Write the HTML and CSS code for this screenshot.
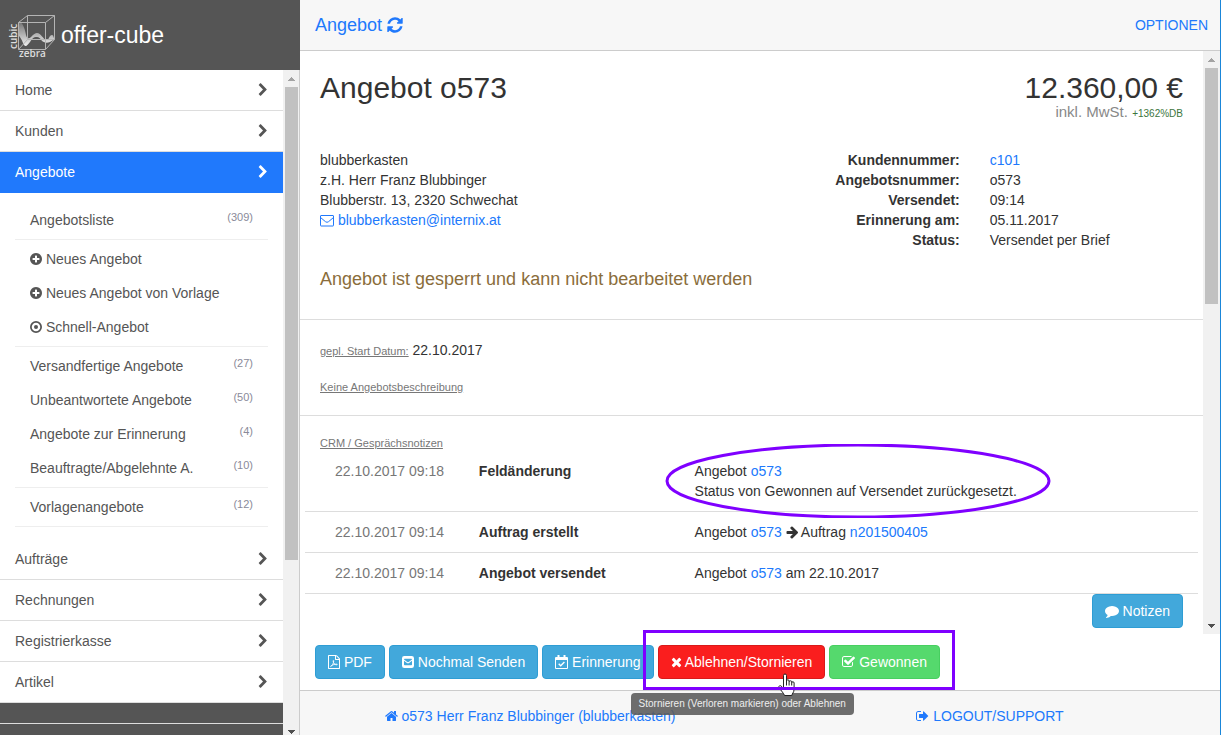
FILE: index.html
```html
<!DOCTYPE html>
<html lang="de">
<head>
<meta charset="utf-8">
<title>offer-cube – Angebot o573</title>
<link rel="stylesheet" href="styles.css">
</head>
<body>
<svg class="sprite" aria-hidden="true">
  <symbol id="chevron" viewBox="256 0 1280 1792"><path d="M1363 877l-742 742q-19 19-45 19t-45-19l-166-166q-19-19-19-45t19-45l531-531-531-531q-19-19-19-45t19-45l166-166q19-19 45-19t45 19l742 742q19 19 19 45t-19 45z"/></symbol>
  <symbol id="plus" viewBox="128 0 1536 1792"><path d="M1344 960v-128q0-26-19-45t-45-19h-256v-256q0-26-19-45t-45-19h-128q-26 0-45 19t-19 45v256h-256q-26 0-45 19t-19 45v128q0 26 19 45t45 19h256v256q0 26 19 45t45 19h128q26 0 45-19t19-45v-256h256q26 0 45-19t19-45zm320-64q0 209-103 385.5t-279.5 279.5-385.5 103-385.5-103-279.5-279.5-103-385.5 103-385.5 279.5-279.5 385.5-103 385.5 103 279.5 279.5 103 385.5z"/></symbol>
  <symbol id="dot" viewBox="128 0 1536 1792"><circle cx="896" cy="896" r="656" fill="none" stroke="currentColor" stroke-width="224"/><circle cx="896" cy="896" r="256"/></symbol>
  <symbol id="up" viewBox="0 0 7 4"><path d="M3 0h1v1h1v1h1v1h1v1H0V3h1V2h1V1h1z"/></symbol>
  <symbol id="down" viewBox="0 0 7 4"><path d="M0 0h7v1H6v1H5v1H4v1H3V3H2V2H1V1H0z"/></symbol>
</svg>

<aside class="sidebar">
  <header class="brand">
    <svg class="logo" viewBox="0 0 48 48" width="48" height="48" aria-label="cubic zebra" role="img">
      <defs><linearGradient id="wave" x1="0" x2="0" y1="0" y2="1"><stop offset="0" stop-color="#fff" stop-opacity=".15"/><stop offset="1" stop-color="#fff" stop-opacity=".9"/></linearGradient></defs>
      <path fill="url(#wave)" d="M9 10c3 1 6 7 7 14 1 4 3 4 5 2 3-3 4-4 6-4 4 0 6 6 9 7 3 1 3-5 6-5 2 0 1 3 3 4l-5 3c-3 1-5 1-8-1-2-3-3-4-5-4-4 0-5 2-7 5-3 4-5 6-7 1-1-3-3-6-4-7z"/>
      <path fill="none" stroke="#b4b4b4" d="M8.500 11.500h27v27h-27zM17.500 4.500h27v24h-27zM8.500 11.500l9-7M35.500 11.500l9-7M35.500 38.500l9-10M8.500 38.500l9-10"/>
      <text class="logo-text" x="9" y="46">zebra</text>
      <text class="logo-text" transform="translate(7 38) rotate(-90)">cubic</text>
    </svg>
    <span class="brand-name">offer-cube</span>
  </header>
  <div class="side-body">
    <nav class="menu">
      <a class="item" href="#">Home<svg class="chev"><use href="#chevron"/></svg></a>
      <a class="item" href="#">Kunden<svg class="chev"><use href="#chevron"/></svg></a>
      <a class="item active" href="#">Angebote<svg class="chev"><use href="#chevron"/></svg></a>
      <div class="submenu">
        <div class="group"><a class="sub" href="#">Angebotsliste<span class="count">(309)</span></a></div>
        <div class="group">
          <a class="sub" href="#"><span><svg class="ico w12"><use href="#plus"/></svg> Neues Angebot</span></a>
          <a class="sub" href="#"><span><svg class="ico w12"><use href="#plus"/></svg> Neues Angebot von Vorlage</span></a>
          <a class="sub" href="#"><span><svg class="ico w12"><use href="#dot"/></svg> Schnell-Angebot</span></a>
        </div>
        <div class="group">
          <a class="sub" href="#">Versandfertige Angebote<span class="count">(27)</span></a>
          <a class="sub" href="#">Unbeantwortete Angebote<span class="count">(50)</span></a>
          <a class="sub" href="#">Angebote zur Erinnerung<span class="count">(4)</span></a>
          <a class="sub" href="#">Beauftragte/Abgelehnte A.<span class="count">(10)</span></a>
        </div>
        <div class="group"><a class="sub" href="#">Vorlagenangebote<span class="count">(12)</span></a></div>
      </div>
      <a class="item" href="#">Aufträge<svg class="chev"><use href="#chevron"/></svg></a>
      <a class="item" href="#">Rechnungen<svg class="chev"><use href="#chevron"/></svg></a>
      <a class="item" href="#">Registrierkasse<svg class="chev"><use href="#chevron"/></svg></a>
      <a class="item" href="#">Artikel<svg class="chev"><use href="#chevron"/></svg></a>
      <div class="menu-gap"></div>
    </nav>
    <div class="scrollbar side-scroll" aria-hidden="true">
      <div class="arrow up"><svg><use href="#up"/></svg></div>
      <div class="track"><div class="thumb thumb-side"></div></div>
      <div class="arrow end"><svg><use href="#down"/></svg></div>
    </div>
  </div>
</aside>

<main class="main">
  <header class="topbar">
    <a class="title" href="#">Angebot <svg class="ico-title" viewBox="128 0 1536 1792"><path d="M1639 1056q0 5-1 7-64 268-268 434.500t-478 166.500q-146 0-282.500-55t-243.500-157l-129 129q-19 19-45 19t-45-19-19-45v-448q0-26 19-45t45-19h448q26 0 45 19t19 45-19 45l-137 137q71 66 161 102t187 36q134 0 250-65t186-179q11-17 53-117 8-23 30-23h192q13 0 22.500 9.500t9.500 22.500zm25-800v448q0 26-19 45t-45 19h-448q-26 0-45-19t-19-45 19-45l138-138q-148-137-349-137-134 0-250 65t-186 179q-11 17-53 117-8 23-30 23h-199q-13 0-22.500-9.500t-9.500-22.500v-7q65-268 270-434.500t480-166.500q146 0 284 55.500t245 156.500l130-129q19-19 45-19t45 19 19 45z"/></svg></a>
    <a href="#">OPTIONEN</a>
  </header>

  <div class="view">
    <div class="content">
      <section class="offer">
        <div class="headline">
          <h1>Angebot o573</h1>
          <div class="price">
            <div class="amount">12.360,00 €</div>
            <div class="tax">inkl. MwSt. <span class="margin">+1362%DB</span></div>
          </div>
        </div>
        <div class="details">
          <address>blubberkasten<br>z.H. Herr Franz Blubbinger<br>Blubberstr. 13, 2320 Schwechat<br>
            <a href="#"><svg class="ico w14" viewBox="0 0 14 14"><path fill="none" stroke="currentColor" d="M1 2.500h12q.5 0 .5.500v9.500q0 .5-.5.500H1q-.5 0-.5-.5V3q0-.5.500-.5zM.500 4.500l5 4.200q1.500 1.200 3 0l5-4.200"/></svg> blubberkasten@internix.at</a></address>
          <dl class="facts">
            <dt>Kundennummer:</dt><dd><a href="#">c101</a></dd>
            <dt>Angebotsnummer:</dt><dd>o573</dd>
            <dt>Versendet:</dt><dd>09:14</dd>
            <dt>Erinnerung am:</dt><dd>05.11.2017</dd>
            <dt>Status:</dt><dd>Versendet per Brief</dd>
          </dl>
        </div>
        <p class="locked">Angebot ist gesperrt und kann nicht bearbeitet werden</p>
      </section>

      <section class="planning">
        <p><span class="caption">gepl. Start Datum:</span> 22.10.2017</p>
        <p><span class="caption">Keine Angebotsbeschreibung</span></p>
      </section>

      <section class="crm">
        <p class="crm-title"><span class="caption">CRM / Gesprächsnotizen</span></p>
        <div class="log">
          <span class="when">22.10.2017 09:18</span><strong>Feldänderung</strong>
          <div class="marked">Angebot <a href="#">o573</a><br>Status von Gewonnen auf Versendet zurückgesetzt.
            <svg class="ellipse" viewBox="0 0 386 74"><ellipse cx="193" cy="37" rx="191" ry="36"/></svg></div>
        </div>
        <div class="log">
          <span class="when">22.10.2017 09:14</span><strong>Auftrag erstellt</strong>
          <div>Angebot <a href="#">o573</a> <svg class="ico w12" viewBox="64 0 1536 1792"><path d="M1600 960q0 54-37 91l-651 651q-39 37-91 37-51 0-90-37l-75-75q-38-38-38-91t38-91l293-293h-704q-52 0-84.500-37.500t-32.500-90.500v-128q0-53 32.500-90.500t84.500-37.500h704l-293-294q-38-36-38-90t38-90l75-75q38-38 90-38 53 0 91 38l651 651q37 35 37 90z"/></svg> Auftrag <a href="#">n201500405</a></div>
        </div>
        <div class="log">
          <span class="when">22.10.2017 09:14</span><strong>Angebot versendet</strong>
          <div>Angebot <a href="#">o573</a> am 22.10.2017</div>
        </div>
        <div class="note-row"><button class="btn info" type="button"><svg class="ico w14" viewBox="0 0 1792 1792"><path d="M1792 896q0 174-120 321.500t-326 233-450 85.500q-70 0-145-8-198 175-460 242-49 14-114 22-17 2-30.500-9t-17.500-29v-1q-3-4-.5-12t2-10 4.500-9.500l6-9 7-8.500 8-9q7-8 31-34.500t34.500-38 31-39.500 32.500-51 27-59 26-76q-157-89-247.500-220t-90.500-281q0-130 71-248.500t191-204.500 286-136.500 348-50.500q244 0 450 85.500t326 233 120 321.500z"/></svg> Notizen</button></div>
      </section>
    </div>
    <div class="scrollbar" aria-hidden="true">
      <div class="arrow up"><svg><use href="#up"/></svg></div>
      <div class="track"><div class="thumb thumb-main"></div></div>
      <div class="arrow"><svg><use href="#down"/></svg></div>
    </div>
  </div>

  <div class="actions">
    <button class="btn info" type="button"><svg class="ico w12" viewBox="128 0 1536 1792"><path d="M1596 380q28 28 48 76t20 88v1152q0 40-28 68t-68 28h-1344q-40 0-68-28t-28-68v-1600q0-40 28-68t68-28h896q40 0 88 20t76 48zm-444-244v376h376q-10-29-22-41l-313-313q-12-12-41-22zm384 1528v-1024h-416q-40 0-68-28t-28-68v-416h-768v1536h1280z"/><path fill="none" stroke="currentColor" stroke-width="110" d="M480 1480c160-60 380-440 380-720 0-90-80-80-80 0 20 300 240 520 500 500 80-20 40-90-60-90-240 0-480 80-680 200-80 50-110 100-60 110z"/></svg> PDF</button>
    <button class="btn info" type="button"><svg class="ico w12" viewBox="0 0 12 14"><path fill-rule="evenodd" d="M2.300 1h7.400Q12 1 12 3.300v7.400Q12 13 9.700 13H2.300Q0 13 0 10.700V3.300Q0 1 2.300 1zM2 5.700v3.800q0 .7.700.7h6.600q.7 0 .7-.7V5.700L7.400 7.800q-1.400 1-2.800 0zM2 4.500l3 2.300q1 .7 2 0l3-2.300q0-.7-.7-.7H2.700q-.7 0-.7.700z"/></svg> Nochmal Senden</button>
    <button class="btn info" type="button"><svg class="ico w13" viewBox="0 0 13 14"><path fill-rule="evenodd" d="M1 2h11q1 0 1 1v10q0 1-1 1H1q-1 0-1-1V3q0-1 1-1zM1 5v8h11V5z"/><path d="M2.500 0h2v4h-2zM8.500 0h2v4h-2z"/><path fill="none" stroke="currentColor" stroke-width="1.400" d="M3.700 8.800L5.700 10.800 9.400 7"/></svg> Erinnerung</button>
    <div class="decision">
      <button class="btn danger" type="button" aria-describedby="tip"><svg class="ico w11" viewBox="192 0 1408 1792"><path d="M1490 1322q0 40-28 68l-136 136q-28 28-68 28t-68-28l-294-294-294 294q-28 28-68 28t-68-28l-136-136q-28-28-28-68t28-68l294-294-294-294q-28-28-28-68t28-68l136-136q28-28 68-28t68 28l294 294 294-294q28-28 68-28t68 28l136 136q28 28 28 68t-28 68l-294 294 294 294q28 28 28 68z"/></svg> Ablehnen/Stornieren</button>
      <button class="btn success" type="button"><svg class="ico w13" viewBox="64 0 1664 1792"><path d="M1472 930v318q0 119-84.500 203.500t-203.500 84.500h-832q-119 0-203.500-84.500t-84.500-203.500v-832q0-119 84.500-203.500t203.500-84.500h832q63 0 117 25 15 7 18 23 3 17-9 29l-49 49q-10 10-23 10-3 0-9-2-23-6-45-6h-832q-66 0-113 47t-47 113v832q0 66 47 113t113 47h832q66 0 113-47t47-113v-254q0-13 9-22l64-64q10-10 23-10 6 0 12 3 20 8 20 29zm231-489l-814 814q-24 24-57 24t-57-24l-430-430q-24-24-24-57t24-57l110-110q24-24 57-24t57 24l263 263 647-647q24-24 57-24t57 24l110 110q24 24 24 57t-24 57z"/></svg> Gewonnen</button>
      <div class="tooltip" id="tip" role="tooltip">Stornieren (Verloren markieren) oder Ablehnen</div>
      <svg class="pointer" viewBox="0 0 17 24"><path fill="#fff" stroke="#222" d="M5.500 16.500V2.500q0-1.500 1.500-1.500t1.500 1.500V8q0-1.200 1.300-1.200t1.300 1.200v.8q0-1 1.300-1t1.300 1v1q0-1 1.200-1t1.200 1.200v6q0 3-1.800 5l-.5 1.500H6.500L5.500 20.500 1.300 15q-1-1.500.200-2.200 1.200-.5 2.400.9zM8.500 8v4.500M11.100 9v3.500M13.700 10v2.500"/></svg>
      <div class="frame"></div>
    </div>
  </div>

  <footer class="footer">
    <a href="#"><svg class="ico w13" viewBox="64 0 1664 1792"><path d="M1472 992v480q0 26-19 45t-45 19h-384v-384h-256v384h-384q-26 0-45-19t-19-45v-480q0-1 .5-3t.5-3l575-474 575 474q1 2 1 6zm223-69l-62 74q-8 9-21 11h-3q-13 0-21-7l-692-577-692 577q-12 8-24 7-13-2-21-11l-62-74q-8-10-7-23.500t11-21.500l719-599q32-26 76-26t76 26l244 204v-195q0-14 9-23t23-9h192q14 0 23 9t9 23v408l219 182q10 8 11 21.500t-7 23.500z"/></svg> o573 Herr Franz Blubbinger (blubberkasten)</a>
    <a href="#"><svg class="ico w13" viewBox="64 0 1664 1792"><path d="M704 1440q0 4 1 20t.5 26.500-3 23.500-10 19.500-20.500 6.500h-320q-119 0-203.500-84.500t-84.500-203.500v-704q0-119 84.500-203.500t203.500-84.500h320q13 0 22.500 9.500t9.500 22.500q0 4 1 20t.5 26.500-3 23.500-10 19.500-20.500 6.500h-320q-66 0-113 47t-47 113v704q0 66 47 113t113 47h312l11.500 1 11.500 3 8 5.500 7 9 2 13.500zm928-544q0 26-19 45l-544 544q-19 19-45 19t-45-19-19-45v-288h-448q-26 0-45-19t-19-45v-384q0-26 19-45t45-19h448v-288q0-26 19-45t45-19 45 19l544 544q19 19 19 45z"/></svg> LOGOUT/SUPPORT</a>
  </footer>
</main>
</body>
</html>
```
FILE: styles.css
```css
* { box-sizing: border-box; }

body {
  margin: 0;
  height: 100vh;
  display: flex;
  overflow: hidden;
  border-right: 1px solid #1a86d9;
  background: #fff;
  color: #333;
  font: 14px/20px "Liberation Sans", Arial, sans-serif;
}

a { color: #2079fc; text-decoration: none; }
h1, p, dl, dd { margin: 0; }
address { font-style: normal; }
svg { fill: currentColor; }
.sprite { position: absolute; width: 0; height: 0; }

.ico { height: 14px; vertical-align: -2px; }
.w11 { width: 11px; }
.w12 { width: 12px; }
.w13 { width: 13px; }
.w14 { width: 14px; }

/* Sidebar */
.sidebar {
  width: 300px;
  flex: none;
  display: flex;
  flex-direction: column;
  background: #555;
}
.brand {
  height: 70px;
  flex: none;
  display: flex;
  align-items: center;
  gap: 3px;
  padding-left: 10px;
  color: #fff;
}
.brand-name { font-size: 23px; line-height: 26px; }
.logo { overflow: visible; }
.logo-text { font: 600 10px "Open Sans", sans-serif; fill: #ddd; }
.side-body { flex: 1; min-height: 0; display: flex; }
.menu { flex: 1; overflow: hidden; }
.item {
  display: flex;
  align-items: center;
  justify-content: space-between;
  height: 41px;
  padding: 0 15px;
  border-bottom: 1px solid #ddd;
  background: #fff;
  color: #555;
}
.item.active { background: #2079fc; border-color: #2079fc; color: #fff; }
.chev { width: 10px; height: 14px; }
.submenu { padding: 10px 15px; background: #fff; }
.group { padding-bottom: 2px; margin-bottom: 2px; border-bottom: 1px solid #eee; }
.sub {
  display: flex;
  justify-content: space-between;
  padding: 7px 15px;
  color: #555;
}
.count { font-size: 11px; line-height: 14px; color: #8a8a99; }
.menu-gap { height: 21px; border-bottom: 1px solid #ddd; }

/* Scrollbars */
.scrollbar {
  width: 17px;
  flex: none;
  display: flex;
  flex-direction: column;
  background: #f1f1f1;
  color: #505050;
}
.side-scroll { border-right: 1px solid #ccc; }
.arrow { height: 17px; display: flex; align-items: center; justify-content: center; }
.arrow svg { width: 7px; height: 4px; }
.arrow.up { color: #a3a3a3; }
.arrow.end { align-items: flex-end; padding-bottom: 1px; }
.track { flex: 1; padding: 0 2px; }
.side-scroll .track { padding-right: 1px; }
.thumb { background: #c1c1c1; }
.thumb-side { height: 75%; }
.thumb-main { height: 43%; }

/* Main column */
.main { flex: 1; min-width: 0; display: flex; flex-direction: column; }
.topbar {
  height: 51px;
  flex: none;
  display: flex;
  align-items: center;
  justify-content: space-between;
  padding: 0 12px 0 15px;
  background: #f7f7f7;
  border-bottom: 1px solid #ccc;
}
.title { font-size: 18px; }
.ico-title { width: 16px; height: 18px; vertical-align: -3px; }
.view { flex: 1; min-height: 0; display: flex; }
.content { flex: 1; min-width: 0; overflow: hidden; }

.offer { padding: 20px 20px 29px; border-bottom: 1px solid #ddd; }
.headline { display: flex; justify-content: space-between; height: 79px; }
h1, .amount { font-size: 30px; line-height: 33px; font-weight: 400; }
.price { text-align: right; }
.tax { font-size: 15px; line-height: 16px; color: #888; }
.margin { font-size: 10px; color: #3c763d; }
.details { display: grid; grid-template-columns: 1fr 1fr; margin: 0 -15px; }
.details address { padding-left: 15px; }
.facts { display: grid; grid-template-columns: 1fr 1fr; }
.facts dt { padding-right: 15px; font-weight: 700; text-align: right; }
.facts dd { padding-left: 15px; }
.locked { margin-top: 18px; font-size: 18px; line-height: 22px; color: #8a6d3b; }

.planning {
  display: grid;
  gap: 16px;
  padding: 20px 20px 19px;
  border-bottom: 1px solid #ddd;
}
.caption { font-size: 11px; line-height: 14px; color: #777; text-decoration: underline; }

.crm { padding: 16px 5px 0; }
.crm-title { padding: 0 15px 9px; }
.log {
  display: grid;
  grid-template-columns: 2fr 3fr 7fr;
  padding: 0 15px 10px;
  border-bottom: 1px solid #ddd;
}
.log + .log { padding-top: 10px; }
.log > * { margin-left: 15px; }
.when { color: #777; }
.marked { position: relative; }
.ellipse {
  position: absolute;
  left: -30px;
  top: -17px;
  width: 386px;
  height: 74px;
  fill: none;
  stroke: #7f00ff;
  stroke-width: 3px;
}
.note-row { display: flex; justify-content: flex-end; padding-right: 15px; }

/* Buttons */
.btn {
  padding: 6px 12px;
  border: 1px solid;
  border-radius: 4px;
  color: #fff;
  font: inherit;
  white-space: nowrap;
}
.info { background: #42a8db; border-color: #2e9dd4; }
.danger { background: #fa1e1e; border-color: #d91a1a; }
.success { background: #55d96d; border-color: #47cf60; }

.actions { flex: none; display: flex; gap: 4px; padding: 11px 15px; }
.decision { position: relative; display: flex; gap: 4px; }
.frame {
  position: absolute;
  inset: -15px -15px -11px -15px;
  border: 3px solid #7f00ff;
}
.pointer { position: absolute; left: 120px; top: 28px; width: 17px; height: 24px; }
.tooltip {
  position: absolute;
  left: -27px;
  top: 48px;
  padding: 4px 8px;
  border-radius: 4px;
  background: rgba(90, 90, 90, .88);
  color: #eee;
  font-size: 10px;
  line-height: 14px;
  white-space: nowrap;
}

.footer {
  height: 45px;
  flex: none;
  display: grid;
  grid-template-columns: 1fr 1fr;
  padding-top: 15px;
  text-align: center;
  background: #f7f7f7;
  border-top: 1px solid #ccc;
}
```
